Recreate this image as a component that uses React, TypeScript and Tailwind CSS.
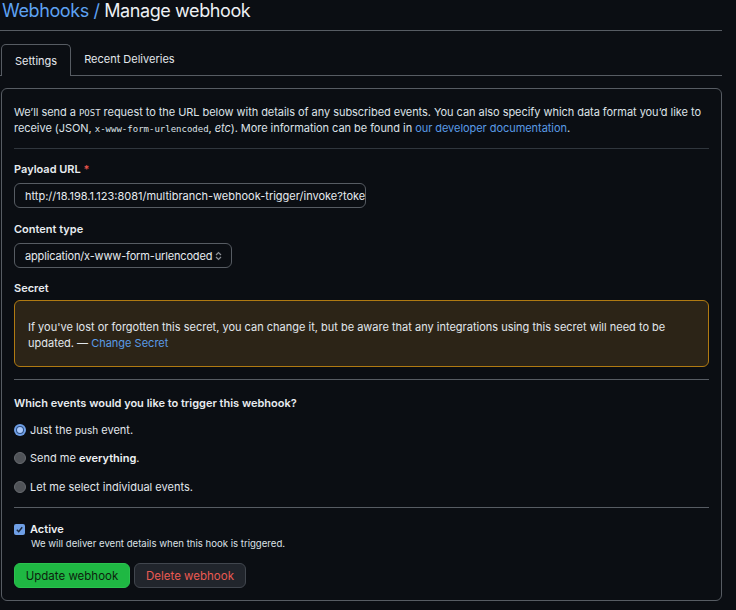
import React from "react";

const sans = { fontFamily: "Inter, 'Noto Sans', 'Liberation Sans', sans-serif" };
const mono = { fontFamily: "'DejaVu Sans Mono', 'Liberation Mono', monospace" };

function Radio({ checked }: { checked?: boolean }) {
  if (checked) {
    return (
      <span className="flex h-[12px] w-[12px] items-center justify-center rounded-full bg-[#6f9fe6]">
        <span className="flex h-[8px] w-[8px] items-center justify-center rounded-full bg-[#2d4f82]">
          <span className="h-[6px] w-[6px] rounded-full bg-[#a9c8fb]" />
        </span>
      </span>
    );
  }
  return <span className="h-[12px] w-[12px] rounded-full bg-[#505358] border border-[#686b70]" />;
}

export default function App() {
  return (
    <div
      className="w-[736px] h-[610px] overflow-hidden bg-[#0b0e13] text-[#e2e7ec] text-[11px] leading-[16px]"
      style={sans}
    >
      <div className="w-[722px]">
        <div className="h-[31px] border-b border-[#575c63]">
          <h1 className="pl-[2px] text-[18px] leading-[22px] tracking-[-0.4px] font-normal">
            <span className="text-[#5ea2f2]">Webhooks /</span>{" "}
            <span className="text-[#eef1f4]">Manage webhook</span>
          </h1>
        </div>

        <div className="mt-[13px] flex h-[32px] items-end border-b border-[#575c63] pl-[1px]">
          <div className="-mb-px flex h-[32px] items-center rounded-t-[5px] border border-b-0 border-[#575c63] bg-[#0b0e13] px-[13px] text-[#e6eaef]">
            Settings
          </div>
          <div className="flex h-[32px] items-center px-[13px] text-[#e2e7ec]">Recent Deliveries</div>
        </div>

        <div className="ml-[1px] mt-[12px] w-[721px] rounded-[6px] border border-[#575c63] px-[12px] pt-[15px] pb-[12px]">
          <p className="whitespace-nowrap tracking-[-0.05px] text-[#dde2e8]">
            We’ll send a <code className="text-[9px] leading-none tracking-normal" style={mono}>POST</code> request to the URL below with details of any subscribed events. You can also specify which data format you’d like to
            <br />
            receive (JSON, <code className="text-[9px] leading-none tracking-normal" style={mono}>x-www-form-urlencoded</code>, <em>etc</em>). More information can be found in{" "}
            <a className="text-[#5a9be6]">our developer documentation</a>.
          </p>

          <div className="mt-[12px] border-t border-[#30363d]" />

          <div className="mt-[12px] font-semibold text-[#e8ecf0]">
            Payload URL <span className="text-[#e5534b]">*</span>
          </div>
          <div className="mt-[6px] flex h-[25px] w-[352px] items-center overflow-hidden rounded-[6px] border border-[#575c63] bg-[#0b0e13] pl-[10px]">
            <span className="whitespace-nowrap text-[#e6eaef]">http://18.198.1.123:8081/multibranch-webhook-trigger/invoke?token=jenkins</span>
          </div>

          <div className="mt-[13px] font-semibold text-[#e8ecf0]">Content type</div>
          <div className="mt-[6px] flex h-[25px] w-[218px] items-center justify-between rounded-[6px] border border-[#575c63] bg-[#0b0e13] pl-[10px] pr-[9px]">
            <span className="whitespace-nowrap tracking-[-0.15px] text-[#e6eaef]">application/x-www-form-urlencoded</span>
            <svg width="7" height="10" viewBox="0 0 7 10" className="shrink-0 text-[#8b9096]">
              <path d="M1 4 L3.5 1.5 L6 4" fill="none" stroke="currentColor" strokeWidth="1.2" />
              <path d="M1 6 L3.5 8.5 L6 6" fill="none" stroke="currentColor" strokeWidth="1.2" />
            </svg>
          </div>

          <div className="mt-[12px] font-semibold text-[#e8ecf0]">Secret</div>
          <div className="mt-[4px] flex h-[67px] items-center rounded-[6px] border border-[#b07a12] bg-[#2c2417] pl-[13px] pr-[14px] pt-[2px]">
            <p className="text-[#e2e7ec]">
              If you've lost or forgotten this secret, you can change it, but be aware that any integrations using this secret will need to be updated. — <a className="text-[#5a9be6]">Change Secret</a>
            </p>
          </div>

          <div className="mt-[12px] border-t border-[#575c63]" />

          <div className="mt-[15px] font-semibold text-[#e8ecf0]">Which events would you like to trigger this webhook?</div>

          <div className="mt-[11px] flex flex-col gap-[12px]">
            <label className="flex h-[16px] items-center gap-[4px]">
              <Radio checked />
              <span>
                Just the <span className="text-[10px]">push</span> event.
              </span>
            </label>
            <label className="flex h-[16px] items-center gap-[4px]">
              <Radio />
              <span>
                Send me <strong className="font-semibold text-[#eef1f4]">everything</strong>.
              </span>
            </label>
            <label className="flex h-[16px] items-center gap-[4px] mt-[1px]">
              <Radio />
              <span>Let me select individual events.</span>
            </label>
          </div>

          <div className="mt-[12px] border-t border-[#575c63]" />

          <div className="mt-[13px] flex items-center gap-[5px]">
            <span className="flex h-[11px] w-[11px] items-center justify-center rounded-[2px] bg-[#6f9fe6]">
              <svg width="9" height="9" viewBox="0 0 9 9">
                <path d="M1.8 4.8 L3.7 6.7 L7.2 2.2" fill="none" stroke="#1b2a40" strokeWidth="1.5" />
              </svg>
            </span>
            <span className="font-semibold text-[#eef1f4]">Active</span>
          </div>
          <div className="ml-[17px] text-[9.6px] leading-[14px] text-[#dde2e8]">
            We will deliver event details when this hook is triggered.
          </div>

          <div className="mt-[12px] flex gap-[4px]">
            <button className="h-[25px] w-[116px] rounded-[6px] border border-[#2bc24f] bg-[#1fb843] text-[11.5px] text-[#0d1f0e]">
              Update webhook
            </button>
            <button className="h-[25px] w-[112px] rounded-[6px] border border-[#41464e] bg-[#21252c] text-[11.5px] text-[#ea5a52]">
              Delete webhook
            </button>
          </div>
        </div>
      </div>
    </div>
  );
}
